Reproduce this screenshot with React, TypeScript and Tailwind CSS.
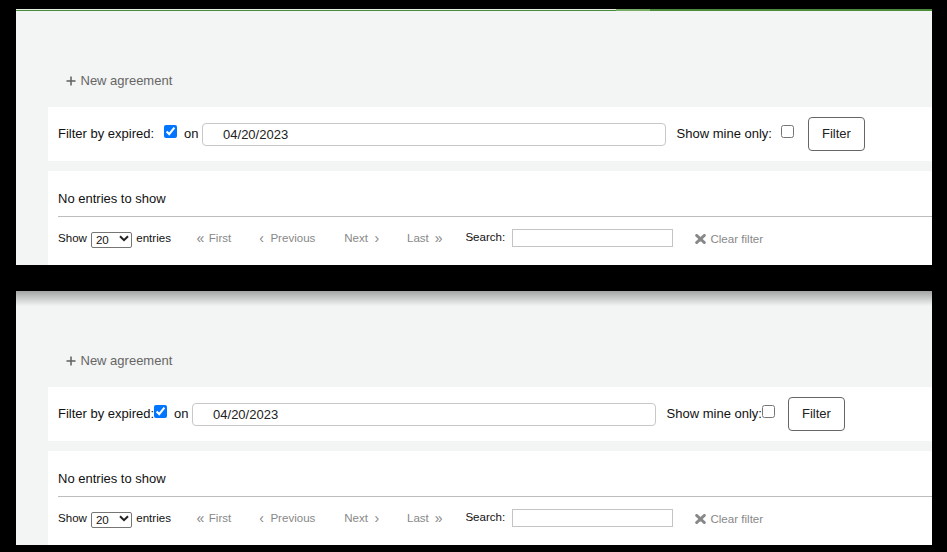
import React from "react";

const FONT = "font-['Liberation_Sans',Arial,sans-serif]";

function PlusIcon() {
  return (
    <svg width="10" height="10" viewBox="0 0 10 10" className="shrink-0">
      <rect x="4.2" y="0.5" width="1.6" height="9" fill="#666" />
      <rect x="0.5" y="4.2" width="9" height="1.6" fill="#666" />
    </svg>
  );
}

function TimesIcon() {
  return (
    <svg width="11" height="10" viewBox="0 0 11 10" className="shrink-0">
      <path d="M1.6 1.4 L9.4 8.6 M9.4 1.4 L1.6 8.6" stroke="#888" strokeWidth="2.8" strokeLinecap="round" />
    </svg>
  );
}

function Chevron() {
  return (
    <svg width="10" height="7" viewBox="0 0 10 7" className="pointer-events-none absolute right-[3px] top-[4.5px]">
      <path d="M1 1.2 L5 5.2 L9 1.2" stroke="#222" strokeWidth="2" fill="none" />
    </svg>
  );
}

function Content({ second }: { second: boolean }) {
  return (
    <div className="flex h-[254px] flex-col bg-[#f3f4f4] pl-[32px]">
      {/* New agreement */}
      <div className="mt-[60px] flex h-[20px] items-center pl-[18px] text-[13px] leading-[20px] text-[#666]">
        <PlusIcon />
        <span className="ml-[4.5px]">New agreement</span>
      </div>

      {/* Filter box */}
      <div className="mt-[16px] flex h-[54px] items-center bg-white pl-[10px] text-[13px] leading-[20px] text-[#111]">
        <span className="whitespace-nowrap">Filter by expired:</span>
        <input
          type="checkbox"
          defaultChecked
          className={
            second
              ? "m-0 mb-[5px] ml-0 h-[13px] w-[13px] shrink-0"
              : "m-0 mb-[5px] ml-[10px] h-[13px] w-[13px] shrink-0"
          }
        />
        <span className="ml-[7px]">on</span>
        <input
          type="text"
          defaultValue="04/20/2023"
          className="ml-[3.5px] h-[23px] w-[464px] shrink-0 rounded-[4px] border border-[#c8c8c8] bg-white pl-[20px] text-[13px] text-[#222] outline-none"
        />
        <span className="ml-[10.5px] whitespace-nowrap">Show mine only:</span>
        <input
          type="checkbox"
          className={
            second
              ? "m-0 mb-[5px] ml-0 h-[13px] w-[13px] shrink-0"
              : "m-0 mb-[5px] ml-[9.5px] h-[13px] w-[13px] shrink-0"
          }
        />
        <button
          className={
            second
              ? "ml-[13px] flex h-[34px] w-[57px] shrink-0 items-center justify-center rounded-[4px] border border-[#666] bg-white text-[13px] text-[#222]"
              : "ml-[13.5px] flex h-[34px] w-[57px] shrink-0 items-center justify-center rounded-[4px] border border-[#666] bg-white text-[13px] text-[#222]"
          }
        >
          Filter
        </button>
      </div>

      {/* Table box */}
      <div className="mt-[10px] flex h-[94px] flex-col bg-white pl-[10px] pt-[19px]">
        <div className="text-[13px] leading-[18px] text-[#111]">No entries to show</div>
        <div className="mt-[8px] h-px bg-[#bdbdbd]" />
        <div className="mt-[11px] flex h-[20px] items-center whitespace-nowrap text-[11.57px] leading-[20px] text-[#111]">
          <span>Show</span>
          <div className="relative ml-[4px] h-[16px] w-[41px] shrink-0">
            <select
              defaultValue="20"
              className="h-[16px] w-[41px] appearance-none rounded-[2px] border border-[#767676] bg-white pl-[4px] text-[11.57px] leading-[14px] text-[#111] outline-none"
            >
              <option value="10">10</option>
              <option value="20">20</option>
              <option value="50">50</option>
              <option value="100">100</option>
            </select>
            <Chevron />
          </div>
          <span className="ml-[4.3px]">entries</span>

          <span className="ml-[25.5px] text-[14px] text-[#888]">«</span>
          <span className="ml-[4.5px] text-[#888]">First</span>

          <span className="ml-[28px] text-[14px] text-[#888]">‹</span>
          <span className="ml-[6.5px] text-[#888]">Previous</span>

          <span className="ml-[28.8px] text-[#888]">Next</span>
          <span className="ml-[6.5px] text-[14px] text-[#888]">›</span>

          <span className="ml-[27.8px] text-[#888]">Last</span>
          <span className="ml-[6px] text-[14px] text-[#888]">»</span>

          <span className="ml-[22.8px] mb-[2px] text-[#111]">Search:</span>
          <input
            type="text"
            className="ml-[6.4px] h-[18px] w-[161px] shrink-0 border border-[#c4c4c4] bg-white outline-none"
          />
          <span className="ml-[22.8px] mt-[2px] flex items-center">
            <TimesIcon />
          </span>
          <span className="ml-[4px] mt-[2px] text-[#888]">Clear filter</span>
        </div>
      </div>
    </div>
  );
}

export default function App() {
  return (
    <div className={`${FONT} h-[552px] w-[947px] overflow-hidden bg-black pl-[16px] pr-[15px] pt-[9px]`}>
      {/* Panel 1 */}
      <div className="w-[916px]">
        <div className="flex h-[2px]">
          <div className="flex w-[600px] flex-col">
            <div className="h-px bg-[#e6eee4]" />
            <div className="h-px bg-[#4a8b3c]" />
          </div>
          <div className="w-[34px] bg-[#78ad66]" />
          <div className="flex-1 bg-[#4a8b3c]" />
        </div>
        <Content second={false} />
      </div>

      {/* Panel 2 */}
      <div className="relative mt-[26px] w-[916px]">
        <Content second={true} />
        <div className="pointer-events-none absolute left-0 right-0 top-0 h-[15px] bg-linear-to-b from-[#a2a3a3] to-[#f3f4f4]/0" />
      </div>
    </div>
  );
}
